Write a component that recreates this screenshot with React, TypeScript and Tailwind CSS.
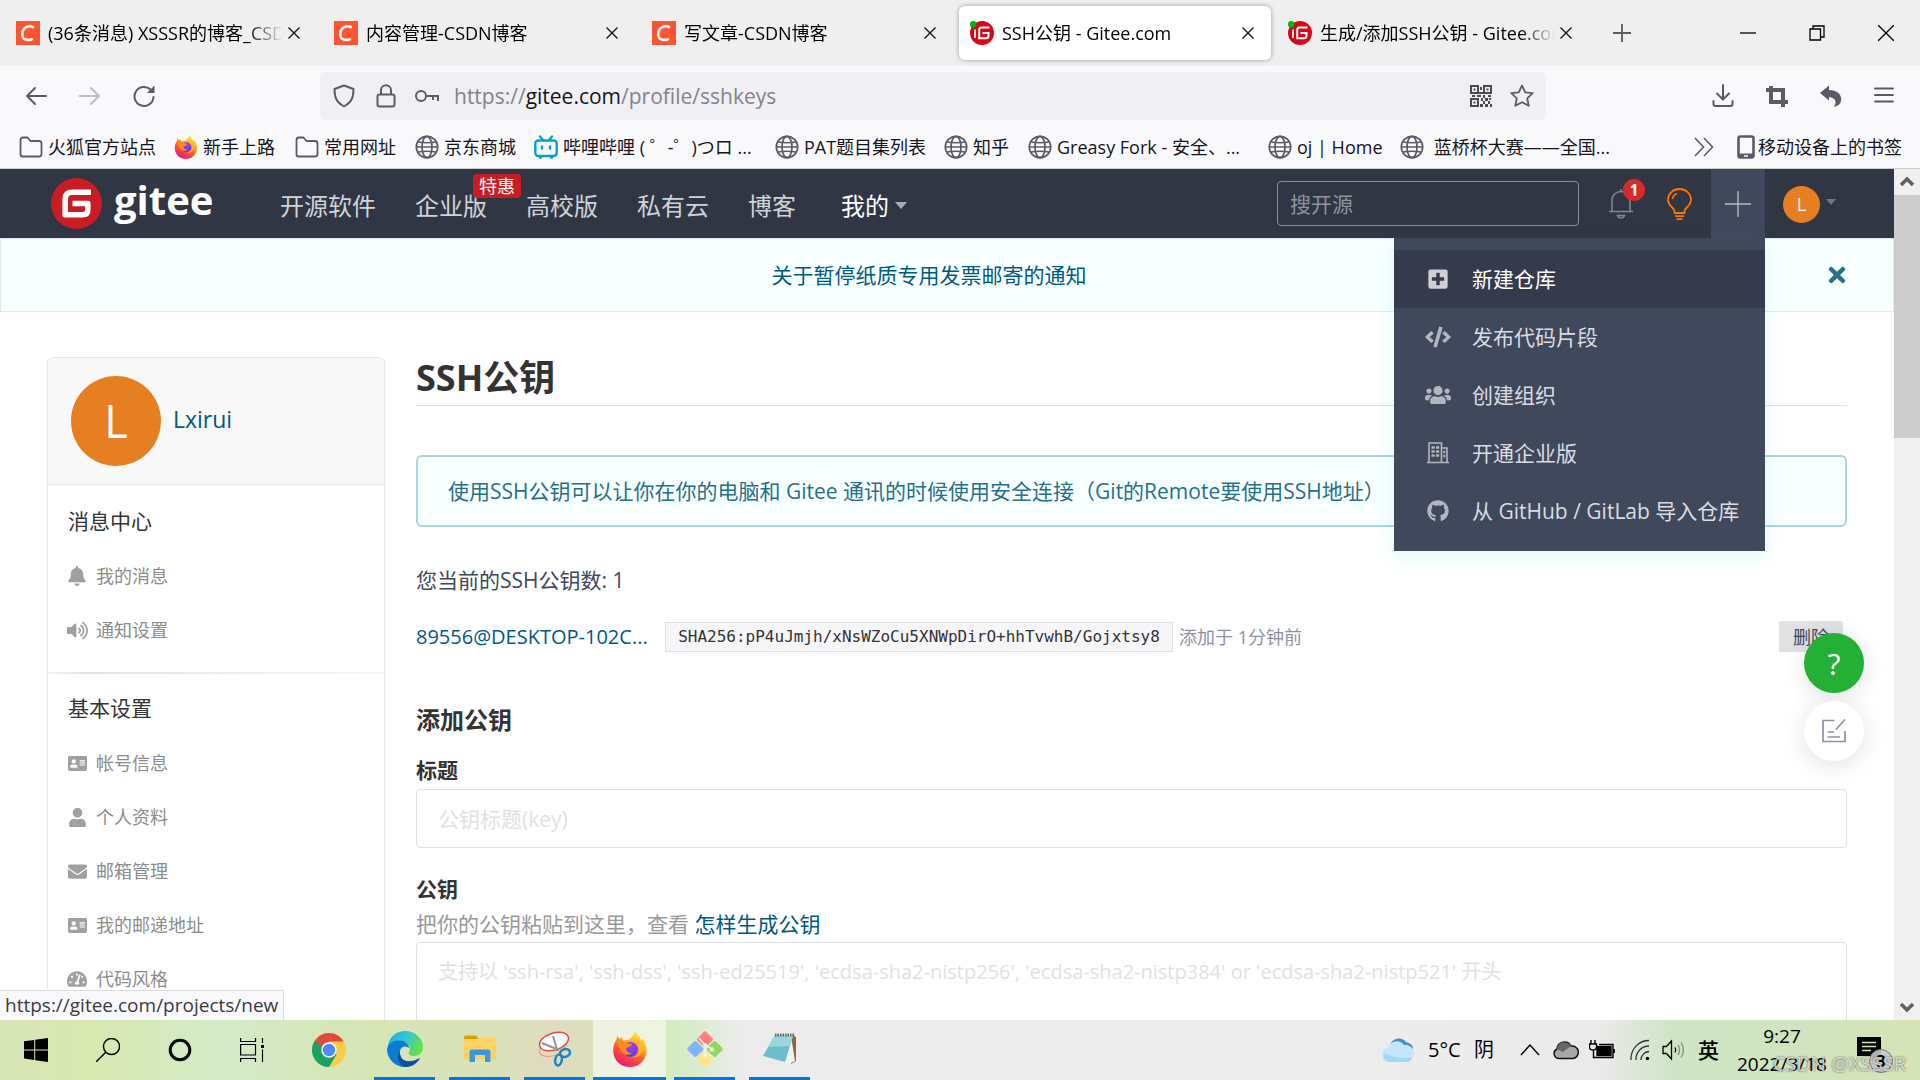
import type { ReactNode } from "react";
import clsx from "clsx";
import {
  FaAddressCard,
  FaBell,
  FaCode,
  FaEnvelope,
  FaGithub,
  FaPlusSquare,
  FaTachometerAlt,
  FaTimes,
  FaUser,
  FaUsers,
  FaVolumeUp,
} from "react-icons/fa";

function CsdnIcon() {
  return (
    <svg viewBox="0 0 24 24" className="size-6 shrink-0">
      <rect width="24" height="24" fill="#fc5531" />
      <path d="M17.8 6.6C13 3.6 6.600 6.300 6.200 12.600 5.900 18.600 11.500 20.500 16.800 17.900" fill="none" stroke="#fff" strokeWidth="2.500" />
    </svg>
  );
}

function GiteeIcon() {
  return (
    <svg viewBox="0 0 24 24" className="size-6 shrink-0">
      <circle cx="12" cy="12" r="12" fill="#d8061a" />
      <path d="M19.500 6.500H11.500Q9.200 6.500 9.200 9V17.200H16Q18.500 17.200 18.500 14.700V12H12.500" fill="none" stroke="#fff" strokeWidth="2" />
      <path d="M5 8.500V17" stroke="#fff" strokeWidth="1.800" />
      <circle cx="3.200" cy="3.200" r="3.200" fill="#00b40c" />
    </svg>
  );
}

function FirefoxIcon({ className }: { className?: string }) {
  return (
    <svg viewBox="0 0 34 36" className={className}>
      <defs>
        <linearGradient id="ffBody" x1="0.8" y1="0" x2="0.3" y2="1">
          <stop offset="0" stopColor="#fff44f" />
          <stop offset="0.35" stopColor="#ffb01f" />
          <stop offset="0.62" stopColor="#ff5a2c" />
          <stop offset="1" stopColor="#e8127a" />
        </linearGradient>
        <radialGradient id="ffGlobe" cx="0.6" cy="0.3" r="0.8">
          <stop offset="0" stopColor="#a23bf5" />
          <stop offset="1" stopColor="#4f3fd0" />
        </radialGradient>
      </defs>
      <path
        d="M22 0c1 3 5 5 6 9l2-1c3 5 4 9 3.500 13C32.500 30 25.500 36 17 36S1 30 .2 21C0 16 1 12 3.500 8.500L4 5l3 3 2-2 1 4c2-1 4-1.500 6-1.500C19 6 21 3 22 0z"
        fill="url(#ffBody)"
      />
      <circle cx="17.500" cy="18.500" r="7.500" fill="url(#ffGlobe)" />
      <path d="M4 8c4 0 7 2 9 4l6 1c-1 3-5 3-6 5 1 3 3 4 6 4-4 3-9 2-11-2C6 16 5 12 4 8z" fill="#ff8a1c" />
      <path d="M16 10c5-2 10 2 10 8 0 5-4 8-8 8 6 2 12-2 12-9 0-6-6-11-14-7z" fill="#ffb32c" opacity="0.8" />
    </svg>
  );
}

function FolderOutline() {
  return (
    <svg viewBox="0 0 24 24" className="size-6 shrink-0" fill="none" stroke="#5b5b66" strokeWidth="1.800">
      <path d="M1.500 19.500V5Q1.500 2.500 4 2.500H8.500L11.500 6H20Q22.500 6 22.500 8.500V19Q22.500 21.500 20 21.500H3.500Q1.500 21.500 1.500 19.500Z" strokeLinejoin="round" />
    </svg>
  );
}

function GlobeIcon() {
  return (
    <svg viewBox="0 0 24 24" className="size-6 shrink-0" fill="none" stroke="#5b5b66" strokeWidth="1.700">
      <circle cx="12" cy="12" r="10.700" />
      <ellipse cx="12" cy="12" rx="5" ry="10.700" />
      <path d="M1.300 12H22.700M3 7Q12 8.500 21 7M3 17Q12 15.500 21 17" />
    </svg>
  );
}

function BilibiliIcon() {
  return (
    <svg viewBox="0 0 24 24" className="size-6 shrink-0" fill="none" stroke="#00a1d6" strokeWidth="2.400" strokeLinecap="round">
      <rect x="1.300" y="5.500" width="21.400" height="15.500" rx="3" />
      <path d="M6 1.500L9 5M18 1.500L15 5M8 11.500V13.500M16 11.500V13.500M6 22.500H7M17 22.500H18" />
    </svg>
  );
}

const tabs = [
  { title: "(36条消息) XSSSR的博客_CSDN博客", icon: <CsdnIcon />, active: false },
  { title: "内容管理-CSDN博客", icon: <CsdnIcon />, active: false },
  { title: "写文章-CSDN博客", icon: <CsdnIcon />, active: false },
  { title: "SSH公钥 - Gitee.com", icon: <GiteeIcon />, active: true },
  { title: "生成/添加SSH公钥 - Gitee.com", icon: <GiteeIcon />, active: false },
];

const bookmarks = [
  { label: "火狐官方站点", icon: <FolderOutline />, width: "w-[155px]" },
  { label: "新手上路", icon: <FirefoxIcon className="size-6 shrink-0" />, width: "w-[121px]" },
  { label: "常用网址", icon: <FolderOutline />, width: "w-[120px]" },
  { label: "京东商城", icon: <GlobeIcon />, width: "w-[119px]" },
  { label: "哔哩哔哩 ( ゜-゜)つロ ...", icon: <BilibiliIcon />, width: "w-[241px]" },
  { label: "PAT题目集列表", icon: <GlobeIcon />, width: "w-[169px]" },
  { label: "知乎", icon: <GlobeIcon />, width: "w-[84px]" },
  { label: "Greasy Fork - 安全、...", icon: <GlobeIcon />, width: "w-[240px]" },
  { label: "oj | Home", icon: <GlobeIcon />, width: "w-[132px]" },
  { label: "\u00a0蓝桥杯大赛——全国...", icon: <GlobeIcon />, width: "w-[230px]" },
];

function TabBar() {
  return (
    <div className="flex h-[66px] shrink-0 items-center bg-[#efefef] pl-[5px]">
      {tabs.map((tab) => (
        <div
          key={tab.title}
          className={clsx(
            "mr-1.5 flex h-[54px] w-[312px] items-center rounded-md pr-4 pl-[11px]",
            tab.active && "bg-white shadow-[0_0_5px_rgba(0,0,0,0.35)]",
          )}
        >
          {tab.icon}
          <span className="ml-2 flex-1 overflow-hidden mask-r-from-85% text-[18px] leading-6 whitespace-nowrap">
            {tab.title}
          </span>
          <button type="button" aria-label="关闭标签页" className="ml-1">
            <svg viewBox="0 0 14 14" className="size-3.5" stroke="#15141a" strokeWidth="1.400">
              <path d="M1.500 1.500L12.500 12.500M12.500 1.500L1.500 12.500" />
            </svg>
          </button>
        </div>
      ))}
      <button type="button" aria-label="新建标签页" className="ml-[18px]">
        <svg viewBox="0 0 18 18" className="size-[18px]" stroke="#5b5b66" strokeWidth="1.800">
          <path d="M9 0V18M0 9H18" />
        </svg>
      </button>
      <div className="ml-auto flex items-center gap-[53px] pr-[26px]">
        <button type="button" aria-label="最小化">
          <svg viewBox="0 0 16 16" className="size-4" stroke="#000" strokeWidth="1.300">
            <path d="M0 8H16" />
          </svg>
        </button>
        <button type="button" aria-label="还原">
          <svg viewBox="0 0 16 16" className="size-4" fill="none" stroke="#000" strokeWidth="1.300">
            <path d="M1 4H11.500V15H1ZM4 4V1H15V12H11.500" />
          </svg>
        </button>
        <button type="button" aria-label="关闭">
          <svg viewBox="0 0 16 16" className="size-4" stroke="#000" strokeWidth="1.300">
            <path d="M0 0L16 16M16 0L0 16" />
          </svg>
        </button>
      </div>
    </div>
  );
}

function QrIcon() {
  return (
    <svg viewBox="0 0 22 22" className="size-[22px]" fill="#4a4a52">
      <path d="M0 0h9v9H0zM2 2v5h5V2zM13 0h9v9h-9zM15 2v5h5V2zM0 13h9v9H0zM2 15v5h5v-5z" fillRule="evenodd" />
      <path d="M3.500 3.500h2v2h-2zM16.500 3.500h2v2h-2zM3.500 16.500h2v2h-2zM10 2h2v3h-2zM9 7h4v2H9zM2 10h3v2H2zM7 10h4v2H7zM13 10h2v3h-2zM18 10h3v2h-3zM11 13h2v3h-2zM15 13h3v3h-3zM19 13h2v2h-2zM13 16h2v3h-2zM18 16h2v3h-2zM20 19h2v3h-2zM10 19h3v3h-3zM15 19h3v3h-3z" />
    </svg>
  );
}

function AddressBar() {
  return (
    <div className="flex h-[60px] shrink-0 items-center bg-[#f9f9fb] pr-[26px] pl-[25px]">
      <div className="flex w-[295px] items-center gap-8">
        <button type="button" aria-label="后退">
          <svg viewBox="0 0 22 22" className="size-[22px]" fill="none" stroke="#5b5b66" strokeWidth="2" strokeLinecap="round" strokeLinejoin="round">
            <path d="M21 11H2M10 3L2 11L10 19" />
          </svg>
        </button>
        <button type="button" aria-label="前进">
          <svg viewBox="0 0 22 22" className="size-[22px]" fill="none" stroke="#bcbcc2" strokeWidth="2" strokeLinecap="round" strokeLinejoin="round">
            <path d="M1 11H20M12 3L20 11L12 19" />
          </svg>
        </button>
        <button type="button" aria-label="刷新">
          <svg viewBox="0 0 22 22" className="size-[22px]" fill="none" stroke="#5b5b66" strokeWidth="2" strokeLinecap="round">
            <path d="M20.500 12A9.500 9.500 0 1 1 17.500 4.500" />
            <path d="M21.500 0.500V8H14Z" fill="#5b5b66" stroke="none" />
          </svg>
        </button>
      </div>
      <div className="flex h-12 w-[1226px] min-w-0 items-center rounded-md bg-[#f0f0f4] px-3">
        <svg viewBox="0 0 24 24" className="size-6 shrink-0" fill="none" stroke="#5b5b66" strokeWidth="2" strokeLinejoin="round">
          <path d="M12 1.500L21.500 5C21.500 13 20 18 12 22.500C4 18 2.500 13 2.500 5Z" />
        </svg>
        <svg viewBox="0 0 24 24" className="ml-[18px] size-6 shrink-0" fill="none" stroke="#5b5b66" strokeWidth="2">
          <rect x="3.500" y="10.500" width="17" height="12" rx="2" />
          <path d="M7 10V6A5 4.800 0 0 1 17 6V10" />
        </svg>
        <svg viewBox="0 0 26 24" className="ml-4 h-6 w-[26px] shrink-0" fill="none" stroke="#5b5b66" strokeWidth="2">
          <circle cx="7" cy="12" r="5" />
          <path d="M12 12H25M24 12V17M19 12V16" />
        </svg>
        <div className="ml-3.5 flex-1 text-[21px] leading-7 text-[#84838a]">
          https://<span className="text-[#15141a]">gitee.com</span>/profile/sshkeys
        </div>
        <button type="button" aria-label="二维码">
          <QrIcon />
        </button>
        <button type="button" aria-label="收藏" className="ml-[18px]">
          <svg viewBox="0 0 24 24" className="size-6" fill="none" stroke="#5b5b66" strokeWidth="1.800" strokeLinejoin="round">
            <path d="M12 1.500L15.200 8.300L22.700 9.200L17.200 14.300L18.700 21.800L12 18.200L5.300 21.800L6.800 14.300L1.300 9.200L8.800 8.300Z" />
          </svg>
        </button>
      </div>
      <div className="ml-auto flex items-center gap-8">
        <button type="button" aria-label="下载">
          <svg viewBox="0 0 22 24" className="h-6 w-[22px]" fill="none" stroke="#5b5b66" strokeWidth="2" strokeLinecap="round">
            <path d="M11 1V15M5 9.500L11 15.500L17 9.500M1.500 17V20Q1.500 22 3.500 22H18.500Q20.500 22 20.500 20V17" />
          </svg>
        </button>
        <button type="button" aria-label="截图">
          <svg viewBox="0 0 22 22" className="size-[22px]" fill="none" stroke="#5b5b66" strokeWidth="4">
            <path d="M0 5H17V22M5 1V17H22" />
          </svg>
        </button>
        <button type="button" aria-label="撤销">
          <svg viewBox="0 0 22 22" className="size-[22px]" fill="#5b5b66">
            <path d="M0 8L9 0.500V5C18 5 22 10 21 16C20.500 19 18 21 14 22C17 17.500 16 12.500 9 12V15.500Z" />
          </svg>
        </button>
        <button type="button" aria-label="菜单">
          <svg viewBox="0 0 20 22" className="h-[22px] w-5" stroke="#5b5b66" strokeWidth="1.800" strokeLinecap="round">
            <path d="M1 3.500H19M1 10H19M1 16.500H19" />
          </svg>
        </button>
      </div>
    </div>
  );
}

function BookmarkBar() {
  return (
    <nav className="flex h-[43px] shrink-0 items-center border-b border-[#cccccc] bg-[#f9f9fb] pr-[18px] pl-[19px] text-[18px] leading-6 text-[#15141a]">
      {bookmarks.map((item) => (
        <a key={item.label} href="#" className={clsx("flex items-center gap-[5px] whitespace-nowrap", item.width)}>
          {item.icon}
          {item.label}
        </a>
      ))}
      <button type="button" aria-label="更多书签" className="ml-auto">
        <svg viewBox="0 0 20 20" className="size-5" fill="none" stroke="#5b5b66" strokeWidth="1.600">
          <path d="M1 1L9.500 10L1 19M10 1L18.500 10L10 19" />
        </svg>
      </button>
      <a href="#" className="ml-[22px] flex items-center gap-0.5 whitespace-nowrap">
        <svg viewBox="0 0 20 24" className="h-6 w-5" fill="none" stroke="#5b5b66">
          <rect x="2.500" y="1.500" width="15" height="21" rx="2" strokeWidth="2.600" />
          <path d="M2 20.500H18" strokeWidth="4" />
          <path d="M8 21H12" stroke="#f9f9fb" strokeWidth="1.500" />
        </svg>
        移动设备上的书签
      </a>
    </nav>
  );
}

const createMenu = [
  { label: "新建仓库", icon: <FaPlusSquare size={22} />, active: true },
  { label: "发布代码片段", icon: <FaCode size={26} />, active: false },
  { label: "创建组织", icon: <FaUsers size={26} />, active: false },
  {
    label: "开通企业版",
    icon: (
      <svg viewBox="0 0 22 22" className="size-[22px]" fill="none" stroke="currentColor" strokeWidth="1.600">
        <path d="M0 20.500H22M2 20V1H14.500V20M14.500 6H20V20" />
        <path d="M4.500 5.500H7.700M9 5.500H12.200M4.500 9.500H7.700M9 9.500H12.200M4.500 13.500H7.700M9 13.500H12.200M16.300 10H18.300M16.300 14H18.300" strokeWidth="2.600" />
      </svg>
    ),
    active: false,
  },
  { label: "从 GitHub / GitLab 导入仓库", icon: <FaGithub size={22} />, active: false },
];

function CreateMenu() {
  return (
    <div className="absolute top-full right-0 z-20 w-[371px] bg-[#40485b] pt-3 pb-[11px] shadow-[0_6px_16px_rgba(64,200,220,0.15)]">
      {createMenu.map((item) => (
        <a
          key={item.label}
          href="#"
          className={clsx(
            "flex items-center text-[21px] leading-[58px] whitespace-nowrap",
            item.active ? "bg-[#353a4d] text-white" : "text-[#dadce2]",
          )}
        >
          <span className={clsx("ml-[30px] flex w-7 justify-center", item.active ? "text-[#cfd0d6]" : "text-[#b3b6bf]")}>
            {item.icon}
          </span>
          <span className="ml-5">{item.label}</span>
        </a>
      ))}
    </div>
  );
}

function SiteHeader() {
  return (
    <header className="flex h-[69px] items-center bg-[#303643] pl-[51px]">
      <a href="#" className="flex w-[229px] shrink-0 items-center gap-3">
        <svg viewBox="0 0 51 51" className="size-[51px]">
          <circle cx="25.500" cy="25.500" r="25.500" fill="#c71d23" />
          <path d="M40 14.200H21Q14.200 14.200 14.200 21V36.800H31.500Q36.800 36.800 36.800 31.500V25.500H21.500" fill="none" stroke="#fff" strokeWidth="5.600" strokeLinejoin="round" />
        </svg>
        <span className="pb-2 text-[40px] leading-[50px] font-bold text-white">gitee</span>
      </a>
      <nav className="mt-1 flex items-center gap-[39px] text-[24px] leading-8 whitespace-nowrap text-[#d0d3d9]">
        <a href="#">开源软件</a>
        <a href="#" className="relative">
          企业版
          <span className="absolute -top-4 left-[58px] rounded-sm bg-[#c71d23] px-1.5 text-[18px] leading-6 text-white">
            特惠
          </span>
        </a>
        <a href="#">高校版</a>
        <a href="#">私有云</a>
        <a href="#">博客</a>
        <a href="#" className="ml-1.5 flex items-center gap-1.5 text-white">
          我的
          <span className="border-x-6 border-t-7 border-x-transparent border-t-[#a9adb6]" />
        </a>
      </nav>
      <input
        type="search"
        aria-label="搜开源"
        placeholder="搜开源"
        className="ml-auto h-[45px] w-[302px] rounded-sm border border-[#8a8f9a] bg-transparent px-3 text-[21px] text-white placeholder:text-[#8f949e]"
      />
      <a href="#" aria-label="通知" className="relative ml-[30px]">
        <svg viewBox="0 0 24 30" className="h-[30px] w-6" fill="none" stroke="#7d8698" strokeWidth="1.600">
          <path d="M0 22.500H24M3 22V11A9 8.500 0 0 1 21 11V22M12 2.500V0M8.500 26.500H15.500Q14.500 29 12 29T8.500 26.500Z" />
        </svg>
        <span className="absolute -top-2.5 left-3.5 size-[22px] rounded-full bg-[#db2828] text-center text-[16px] leading-[22px] font-bold text-white">
          1
        </span>
      </a>
      <a href="#" aria-label="动态" className="ml-[34px]">
        <svg viewBox="0 0 25 32" className="h-8 w-[25px]" fill="none" stroke="#fe7300" strokeWidth="1.800">
          <path d="M7.500 25V23C7.500 20 1 18 1 11.500A11.500 10.500 0 0 1 24 11.500C24 18 17.500 20 17.500 23V25Z" />
          <path d="M5.500 11Q6 7 10 5.500M8 28.200H17M9.500 31.100H15.500" />
        </svg>
      </a>
      <div className="relative ml-[19px] flex h-full w-[54px] items-center justify-center bg-[#40485b]">
        <button type="button" aria-label="新建">
          <svg viewBox="0 0 26 26" className="size-[26px]" stroke="#b8bcc6" strokeWidth="1.400">
            <path d="M13 0V26M0 13H26" />
          </svg>
        </button>
        <CreateMenu />
      </div>
      <button type="button" aria-label="个人菜单" className="mt-0.5 mr-[58px] ml-[18px] flex items-center gap-1.5">
        <span className="size-[37px] rounded-full bg-[#e67e22] text-center text-[18px] leading-[37px] text-white">L</span>
        <span className="mb-1.5 border-x-5 border-t-6 border-x-transparent border-t-[#6f7789]" />
      </button>
    </header>
  );
}

const sideSections = [
  {
    title: "消息中心",
    items: [
      { label: "我的消息", icon: <FaBell size={20} /> },
      { label: "通知设置", icon: <FaVolumeUp size={21} /> },
    ],
  },
  {
    title: "基本设置",
    items: [
      { label: "帐号信息", icon: <FaAddressCard size={19} /> },
      { label: "个人资料", icon: <FaUser size={19} /> },
      { label: "邮箱管理", icon: <FaEnvelope size={19} /> },
      { label: "我的邮递地址", icon: <FaAddressCard size={19} /> },
      { label: "代码风格", icon: <FaTachometerAlt size={20} /> },
    ],
  },
];

function Sidebar() {
  return (
    <aside className="mt-[45px] w-[338px] shrink-0 rounded-t-md border border-[#e3e8ec]">
      <div className="flex items-center rounded-t-md border-b border-[#e0e8ee] bg-[#f8f8f8] py-[18px] pl-[23px]">
        <span className="size-[90px] rounded-full bg-[#e67e22] text-center text-[45px] leading-[90px] text-white">L</span>
        <a href="#" className="ml-3 pb-1 text-[23px] leading-8 text-[#005980]">
          Lxirui
        </a>
      </div>
      {sideSections.map((section, index) => (
        <section key={section.title}>
          {index > 0 && <div className="mt-[15px] h-0.5 bg-linear-to-r from-[#f4f4f4] via-[#e4e4e4] via-10% to-[#f6f6f6]" />}
          <h2 className={clsx("pb-[13px] pl-5 text-[21px] leading-[30px] text-[#333]", index > 0 ? "pt-[19px]" : "pt-[21px]")}>
            {section.title}
          </h2>
          {section.items.map((item) => (
            <a key={item.label} href="#" className="flex items-center pl-[18px] text-[18px] leading-[54px] text-[#8c8c8c]">
              <span className="flex w-[22px] justify-center text-[#a0a0a0]">{item.icon}</span>
              <span className="ml-2">{item.label}</span>
            </a>
          ))}
        </section>
      ))}
    </aside>
  );
}

function SshKeys() {
  return (
    <main className="mt-[39px] min-w-0 flex-1 text-[21px] leading-[30px]">
      <h1 className="border-b border-[#dfe1e5] text-[36px] leading-[54px] font-bold text-[#333]">SSH公钥</h1>
      <div className="mt-[49px] rounded-md border-2 border-[#a9d5de] bg-[#f8ffff] px-[30px] py-[19px] whitespace-nowrap text-[#276f86]">
        使用SSH公钥可以让你在你的电脑和 Gitee 通讯的时候使用安全连接（Git的Remote要使用SSH地址）
      </div>
      <p className="mt-[38px] text-[#40485b]">您当前的SSH公钥数: 1</p>
      <div className="mt-[26px] flex items-center whitespace-nowrap">
        <a href="#" className="w-[249px] text-[20px] text-[#005980]">
          89556@DESKTOP-102C...
        </a>
        <code className="w-[508px] border border-[#dfe0e8] bg-[#f6f6f9] text-center font-['DejaVu_Sans_Mono',monospace] text-[16px] leading-[28px] text-[#333]">
          SHA256:pP4uJmjh/xNsWZoCu5XNWpDirO+hhTvwhB/Gojxtsy8
        </code>
        <span className="ml-1.5 text-[18px] text-[#8c92a4]">添加于 1分钟前</span>
        <button type="button" className="mr-1 ml-auto h-[31px] rounded-xs bg-[#e0e1e2] px-3.5 text-[18px] text-[#40485b]">
          删除
        </button>
      </div>
      <form>
        <h2 className="mt-[53px] text-[24px] font-bold text-[#333]">添加公钥</h2>
        <label htmlFor="key-title" className="mt-5 block font-bold text-[#333]">
          标题
        </label>
        <input
          id="key-title"
          type="text"
          placeholder="公钥标题(key)"
          className="mt-1 block h-[59px] w-full rounded-sm border border-[#dfe0e8] px-[21px] placeholder:text-[#e1e1e1]"
        />
        <label htmlFor="key-body" className="mt-[26px] block font-bold text-[#333]">
          公钥
        </label>
        <p className="mt-[5px] text-[#999]">
          把你的公钥粘贴到这里，查看{" "}
          <a href="#" className="text-[#005980]">
            怎样生成公钥
          </a>
        </p>
        <textarea
          id="key-body"
          rows={8}
          placeholder="支持以 'ssh-rsa', 'ssh-dss', 'ssh-ed25519', 'ecdsa-sha2-nistp256', 'ecdsa-sha2-nistp384' or 'ecdsa-sha2-nistp521' 开头"
          className="mt-[3px] block w-full resize-none rounded-sm border border-[#dfe0e8] px-[21px] py-[14px] text-[20px] placeholder:text-[#e1e1e1]"
        />
      </form>
    </main>
  );
}

function Scrollbar() {
  return (
    <div className="flex w-[26px] shrink-0 flex-col items-center bg-[#f0f0f0]">
      <svg viewBox="0 0 26 26" className="size-[26px]" fill="none" stroke="#606060" strokeWidth="3.500">
        <path d="M7 16L13 10L19 16" />
      </svg>
      <div className="h-[243px] w-full bg-[#cdcdcd]" />
      <svg viewBox="0 0 26 26" className="mt-auto size-[26px]" fill="none" stroke="#606060" strokeWidth="3.500">
        <path d="M7 10L13 16L19 10" />
      </svg>
    </div>
  );
}

function FloatingButtons() {
  return (
    <div className="absolute top-[464px] right-[30px] flex flex-col gap-2">
      <button type="button" aria-label="帮助" className="size-[60px] rounded-full bg-[#24b034] text-[30px] text-white shadow-[0_4px_24px_rgba(0,0,0,0.12)]">
        ?
      </button>
      <button type="button" aria-label="反馈" className="flex size-[60px] items-center justify-center rounded-full bg-white shadow-[0_4px_24px_rgba(0,0,0,0.12)]">
        <svg viewBox="0 0 24 24" className="size-6" fill="none" stroke="#8c92a4" strokeWidth="1.700">
          <path d="M12.500 1.500H1V22.500H23V12M23 0.500L14 10.500M5.500 13H12M5.500 18H18" />
        </svg>
      </button>
    </div>
  );
}

function WindowsIcon() {
  return (
    <svg viewBox="0 0 24 24" className="size-6" fill="#000">
      <path d="M0 3.300L10.200 1.900V11.400H0ZM11.200 1.700L24 0V11.400H11.200ZM0 12.500H10.200V22L0 20.600ZM11.200 12.500H24V24L11.200 22.200Z" />
    </svg>
  );
}

function ChromeIcon() {
  return (
    <svg viewBox="0 0 34 34" className="size-[34px]">
      <circle cx="17" cy="17" r="17" fill="#fbcb43" />
      <path d="M17 17L24.500 21.500L17 34A17 17 0 0 1 2.300 8.500Z" fill="#1aa260" />
      <path d="M2.300 8.500A17 17 0 0 1 31.700 8.500H17L9.500 21Z" fill="#dc4b3e" />
      <path d="M2.300 8.500L9.800 21.200L17 17Z" fill="#1aa260" />
      <circle cx="17" cy="17" r="7.700" fill="#fff" />
      <circle cx="17" cy="17" r="6.200" fill="#4c8bf5" />
    </svg>
  );
}

function EdgeIcon() {
  return (
    <svg viewBox="0 0 36 36" className="size-9">
      <defs>
        <linearGradient id="edgeTop" x1="0" y1="0" x2="1" y2="0.5">
          <stop offset="0" stopColor="#1fa5df" />
          <stop offset="0.5" stopColor="#33c6d5" />
          <stop offset="1" stopColor="#63e04c" />
        </linearGradient>
      </defs>
      <path d="M1 14C3 5 10 0 18 0C29 0 36 8 36 16C36 22 32 25 27 25C23 25 21 23 22 21C25 16 21 11 14 11C8 11 3 13 1 18Z" fill="url(#edgeTop)" />
      <path d="M0 18C1 12 7 9 13 9.500C18 10 22 13 22 17C17 13 12 17 13 23C14 30 22 33 29 29L33 27C29 34 23 36 18 36C8 36 0 28 0 18Z" fill="#0c7bd8" />
      <path d="M13 20C12 29 20 34 33 27C29 34 23 36 18 36C11 34 9 25 13 20Z" fill="#124f9b" />
    </svg>
  );
}

function ExplorerIcon() {
  return (
    <svg viewBox="0 0 32 28" className="h-7 w-8">
      <path d="M0 2Q0 .5 1.500 .5H12L15 4H0Z" fill="#dd9d0b" />
      <path d="M0 4H13L16 2.500H30.500Q32 2.500 32 4V25H0Z" fill="#fdd163" />
      <path d="M5.500 27V17Q5.500 14.500 8 14.500H24Q26.500 14.500 26.500 17V27H21V20H11V27Z" fill="#3a96dd" />
    </svg>
  );
}

function SnipIcon() {
  return (
    <svg viewBox="0 0 34 36" className="h-9 w-[34px]" fill="none">
      <ellipse cx="14" cy="18" rx="13" ry="7" stroke="#e89a8c" strokeWidth="1.200" transform="rotate(-14 14 18)" />
      <ellipse cx="16" cy="10.500" rx="15" ry="8.500" fill="#f8fafc" stroke="#e84545" strokeWidth="1.500" transform="rotate(-18 16 10.500)" />
      <path d="M15 5L19.500 20M4 12L21 19" stroke="#8f979f" strokeWidth="2" />
      <ellipse cx="27" cy="22" rx="5" ry="3.800" stroke="#1c84c6" strokeWidth="2.500" transform="rotate(-15 27 22)" />
      <ellipse cx="20.500" cy="29" rx="3.300" ry="5.500" stroke="#1c84c6" strokeWidth="2.500" transform="rotate(10 20.500 29)" />
    </svg>
  );
}

function GitIcon() {
  return (
    <svg viewBox="0 0 36 36" className="size-9">
      <g transform="rotate(45 18 18)">
        <rect x="5" y="5" width="12.300" height="12.300" rx="2" fill="#ff8080" />
        <rect x="18.700" y="5" width="12.300" height="12.300" rx="2" fill="#8fd663" />
        <rect x="5" y="18.700" width="12.300" height="12.300" rx="2" fill="#80b3ff" />
        <rect x="18.700" y="18.700" width="12.300" height="12.300" rx="2" fill="#ffe680" />
      </g>
      <path d="M12 7L18 14V25M18 14L25 18" stroke="#f0f3e8" strokeWidth="1.500" fill="none" />
      <circle cx="18" cy="14" r="2" fill="#f0f3e8" />
      <circle cx="25" cy="18.500" r="2.200" fill="#f0f3e8" />
      <circle cx="18" cy="24.500" r="2.200" fill="#f0f3e8" />
    </svg>
  );
}

function NotepadIcon() {
  return (
    <svg viewBox="0 0 34 32" className="h-8 w-[34px]">
      <path d="M29 2L33 4V28L28 31Z" fill="#8c6b32" />
      <path d="M28 3L32 28L26 31L16 27Z" fill="#eef3f5" />
      <path d="M12 2L30 3L22 29L0 23Z" fill="#6fbccb" />
      <path d="M12 2L30 3L27 13L5 14Z" fill="#9bd6e0" />
      <path d="M12 2H31" stroke="#666" strokeWidth="3" strokeDasharray="1.500 1" />
    </svg>
  );
}

function TaskApp({ label, children, active }: { label: string; children: ReactNode; active?: boolean }) {
  return (
    <button
      type="button"
      aria-label={label}
      className={clsx(
        "flex h-full shrink-0 items-center justify-center border-b-3 border-[#0078d7]",
        active ? "-mx-1.5 w-[73px] bg-white/55" : "w-[61px]",
      )}
    >
      {children}
    </button>
  );
}

function Taskbar() {
  return (
    <footer className="relative flex h-[60px] shrink-0 items-center bg-[#ececec]">
      <div className="flex h-full w-[824px] shrink-0 items-center bg-[linear-gradient(90deg,#d8e6b8_0,#d9e8b0_90px,#d3ebc8_220px,#d7e5b6_360px,#d8e2b8_480px,#e0dbbf_550px,#d6e6b8_640px,#d5ebc4_680px,#ececec_740px)]">
        <div className="flex w-[366px] shrink-0 items-center pl-6">
          <button type="button" aria-label="开始" className="w-[72px]">
            <WindowsIcon />
          </button>
          <button type="button" aria-label="搜索" className="w-[72px]">
            <svg viewBox="0 0 24 24" className="size-6" fill="none" stroke="#000" strokeWidth="1.400">
              <circle cx="15.500" cy="8.500" r="8" />
              <path d="M9.500 14.500L0 24" />
            </svg>
          </button>
          <button type="button" aria-label="Cortana" className="w-[72px]">
            <svg viewBox="0 0 24 24" className="size-6" fill="none" stroke="#000" strokeWidth="3">
              <circle cx="12" cy="12" r="9.800" />
            </svg>
          </button>
          <button type="button" aria-label="任务视图" className="w-[72px]">
            <svg viewBox="0 0 24 24" className="size-6" fill="none" stroke="#000" strokeWidth="1.200">
              <path d="M.6 0V3.500H15.500V0M.6 6.500H15.500V17H.6ZM.6 24V20.500H15.500V24M22.500 0V5M22.500 11.500V24" />
              <path d="M21 7H24V10H21Z" fill="#000" stroke="none" />
            </svg>
          </button>
          <button type="button" aria-label="Chrome" className="shrink-0">
            <ChromeIcon />
          </button>
        </div>
        <div className="flex h-full shrink-0 gap-3.5 pl-2">
          <TaskApp label="Edge">
            <EdgeIcon />
          </TaskApp>
          <TaskApp label="文件资源管理器">
            <ExplorerIcon />
          </TaskApp>
          <TaskApp label="截图工具">
            <SnipIcon />
          </TaskApp>
          <TaskApp label="Firefox" active>
            <FirefoxIcon className="h-9 w-[34px]" />
          </TaskApp>
          <TaskApp label="Git">
            <GitIcon />
          </TaskApp>
          <TaskApp label="记事本">
            <NotepadIcon />
          </TaskApp>
        </div>
      </div>
      <div className="ml-auto flex h-full w-[538px] shrink-0 items-center bg-[linear-gradient(90deg,#ececec_0,#eaeaea_220px,#cfe4c6_290px,#cfe4c2_380px,#d6e3b5_538px)] text-[20px] leading-7 text-black">
        <svg viewBox="0 0 32 28" className="h-7 w-8">
          <path d="M8 10A9 9 0 0 1 24 6Q32 8 31 14L28 24H8Z" fill="#3f8fd4" />
          <path d="M7 26A7 7 0 0 1 6 12A9 9 0 0 1 22 9A7 7 0 0 1 25 26Z" fill="#c4e5fb" />
          <path d="M7 26A7 7 0 0 1 2 17Q14 24 30 21Q29 26 25 26Z" fill="#a5d6f5" />
        </svg>
        <span className="ml-3.5 w-[46px]">5°C</span>
        <span className="w-[46px]">阴</span>
        <svg viewBox="0 0 20 20" className="size-5" fill="none" stroke="#000" strokeWidth="1.400">
          <path d="M1 15L10 5L19 15" />
        </svg>
        <svg viewBox="0 0 26 20" className="ml-[13px] h-5 w-[26px]">
          <path d="M6 18.500A5 5 0 0 1 4 9A7.500 7.500 0 0 1 18 6A6 6 0 0 1 20 18.500Z" fill="#a8a8a8" stroke="#111" strokeWidth="1.500" />
          <path d="M4 9A7.500 7.500 0 0 1 18 6L10 12Z" fill="#666" />
        </svg>
        <svg viewBox="0 0 26 20" className="ml-2.5 h-5 w-[26px]" fill="none" stroke="#000" strokeWidth="1.400">
          <path d="M10 4.500H24V17.500H4.500V10M25.200 9V13M2 0V4M6 0V4M.5 4H7.500V7Q7.500 10 4 10T.5 7Z" />
          <rect x="8" y="6.500" width="14" height="9" fill="#000" />
        </svg>
        <svg viewBox="0 0 20 22" className="ml-[15px] h-[22px] w-5" fill="none" stroke="#333" strokeWidth="1.300">
          <path d="M1 21V19A18 18 0 0 1 19 1.500M6 21V19A13 13 0 0 1 19 7M11 21A8.500 8.500 0 0 1 19 12.500" />
          <circle cx="17.500" cy="19.500" r="1.700" fill="#000" stroke="none" />
        </svg>
        <svg viewBox="0 0 24 22" className="ml-3 h-[22px] w-6" fill="none" stroke="#000" strokeWidth="1.300">
          <path d="M1 7.500H4.500L9.500 2V20L4.500 14.500H1ZM13 8.500Q14.500 11 13 13.500" />
          <path d="M16 6Q19 11 16 16M19 3.500Q24 11 19 18.500" stroke="#888" />
        </svg>
        <span className="ml-3 w-[38px] text-[21px] font-medium">英</span>
        <div className="w-[92px] text-center text-[19px] leading-[28px] whitespace-nowrap">
          <div>9:27</div>
          <div>2022/3/18</div>
        </div>
        <button type="button" aria-label="通知中心" className="relative ml-[29px]">
          <svg viewBox="0 0 24 26" className="h-[26px] w-6" fill="#000">
            <path d="M0 0H24V19H20V26L13 19H0Z" />
            <path d="M5 5.500H19M5 9.500H19M5 13.500H14" stroke="#d6e3b5" strokeWidth="1.300" />
          </svg>
          <span className="absolute top-3 left-3 size-6 rounded-full border border-[#777] bg-[#c9c9c9]/90 text-center text-[16px] leading-[22px] font-bold">
            3
          </span>
        </button>
      </div>
      <span className="absolute right-3.5 bottom-1 text-[20px] leading-6 text-white/70 [text-shadow:0_0_2px_rgba(0,0,0,0.7)]">
        CSDN @XSSSR
      </span>
    </footer>
  );
}

function App() {
  return (
    <div className="flex h-screen flex-col overflow-hidden bg-white font-['Open_Sans','Noto_Sans_CJK_SC',sans-serif]">
      <TabBar />
      <AddressBar />
      <BookmarkBar />
      <div className="relative flex min-h-0 flex-1">
        <div className="relative min-w-0 flex-1 overflow-hidden">
          <SiteHeader />
          <div className="flex h-[74px] items-center border border-[#dfe8ec] bg-[#f8ffff] pr-11 text-[21px] leading-[30px]">
            <a href="#" className="flex-1 pl-8 text-center text-[#005980]">
              关于暂停纸质专用发票邮寄的通知
            </a>
            <button type="button" aria-label="关闭通知" className="text-[#276f86]">
              <FaTimes size={24} />
            </button>
          </div>
          <div className="flex gap-[31px] px-[47px]">
            <Sidebar />
            <SshKeys />
          </div>
          <FloatingButtons />
        </div>
        <Scrollbar />
        <div className="absolute bottom-0 left-0 border-t border-r border-[#dcdce0] bg-[#f9f9fb] px-[5px] text-[19px] leading-[29px] text-[#3a3944]">
          https://gitee.com/projects/new
        </div>
      </div>
      <Taskbar />
    </div>
  );
}

export default App;
